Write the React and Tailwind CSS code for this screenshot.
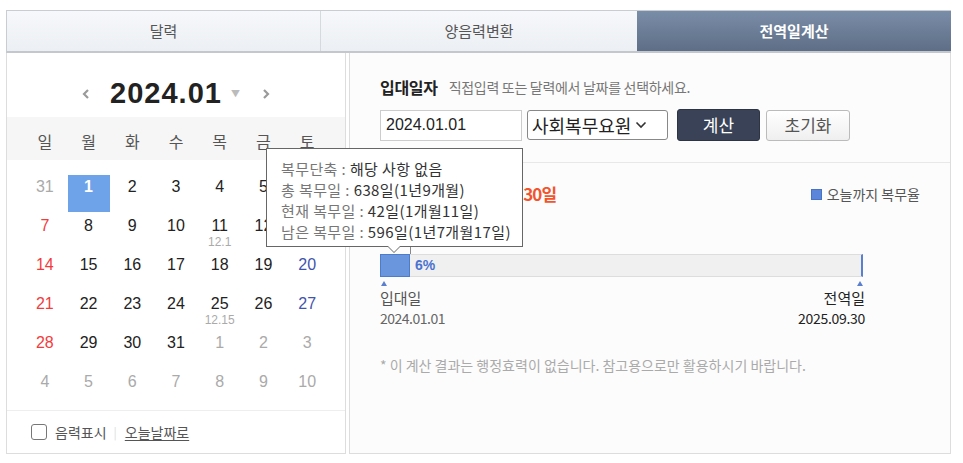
import React from "react";

const KR = "font-['Noto_Sans_CJK_KR','Noto_Sans',sans-serif]";

const rows = [
  [{ d: 31, o: true }, { d: 1, sel: true }, { d: 2 }, { d: 3 }, { d: 4 }, { d: 5 }, { d: 6 }],
  [{ d: 7 }, { d: 8 }, { d: 9 }, { d: 10 }, { d: 11, l: "12.1" }, { d: 12 }, { d: 13 }],
  [{ d: 14 }, { d: 15 }, { d: 16 }, { d: 17 }, { d: 18 }, { d: 19 }, { d: 20 }],
  [{ d: 21 }, { d: 22 }, { d: 23 }, { d: 24 }, { d: 25, l: "12.15" }, { d: 26 }, { d: 27 }],
  [{ d: 28 }, { d: 29 }, { d: 30 }, { d: 31 }, { d: 1, o: true }, { d: 2, o: true }, { d: 3, o: true }],
  [{ d: 4, o: true }, { d: 5, o: true }, { d: 6, o: true }, { d: 7, o: true }, { d: 8, o: true }, { d: 9, o: true }, { d: 10, o: true }],
];

function dayColor(c, i) {
  if (c.sel) return "text-white font-bold";
  if (c.o) return "text-[#aaaaaa]";
  if (i === 0) return "text-[#f23c3c]";
  if (i === 6) return "text-[#3f55ad]";
  return "text-[#222222]";
}

function Chevron({ dir }) {
  return (
    <svg width="8" height="12" viewBox="0 0 8 12">
      <path
        d={dir === "left" ? "M6 2 L2 6 L6 10" : "M2 2 L6 6 L2 10"}
        fill="none"
        stroke="#9a9a9a"
        strokeWidth="2.2"
      />
    </svg>
  );
}

export default function App() {
  return (
    <div className={`relative w-[963px] h-[463px] bg-white pt-[10px] px-[6px] ${KR}`}>
      {/* Tabs */}
      <div className="flex h-[43px] border-t border-[#c9ccd1] border-b-2 border-b-[#c4c7cc] border-l border-l-[#c9ccd1] w-[945px]">
        <div className="w-[314px] flex items-center justify-center bg-gradient-to-b from-[#f6f8fb] to-[#eceff3] border-r border-[#d6d9de] text-[15px] text-[#555]">
          달력
        </div>
        <div className="w-[316px] flex items-center justify-center bg-gradient-to-b from-[#f6f8fb] to-[#eceff3] text-[15px] text-[#555]">
          양음력변환
        </div>
        <div className="flex-1 flex items-center justify-center bg-gradient-to-b from-[#7a8da8] to-[#5e6e86] text-[15px] font-bold text-white">
          전역일계산
        </div>
      </div>

      <div className="flex gap-[3px] h-[401px] w-[945px]">
        {/* Left calendar */}
        <div className="w-[340px] border-l border-r border-b border-[#dddddd] flex flex-col">
          <div className="h-[64px] flex items-start justify-center pt-[17px]">
            <div className="flex items-center h-[48px]">
              <Chevron dir="left" />
              <span className="ml-[20px] text-[29px] font-bold tracking-[1px] text-[#222] font-['Liberation_Sans',Arial,sans-serif]">
                2024.01
              </span>
              <span className="ml-[9px] text-[9px] text-[#bbbbbb]">▼</span>
              <span className="ml-[22px]">
                <Chevron dir="right" />
              </span>
            </div>
          </div>
          <div className="h-[43px] bg-[#f6f6f6] grid grid-cols-7 px-[16px] items-center pt-[5px] text-[16px] text-[#555]">
            {["일", "월", "화", "수", "목", "금", "토"].map((w) => (
              <div key={w} className="text-center">
                {w}
              </div>
            ))}
          </div>
          <div className="pt-[15px] px-[16px] grid grid-cols-7 font-['Liberation_Sans',Arial,sans-serif]">
            {rows.map((r, ri) =>
              r.map((c, i) => (
                <div key={ri + "-" + i} className="h-[39px] flex flex-col items-center">
                  <div
                    className={`w-[42px] h-[37px] flex flex-col items-center pt-[2px] ${
                      c.sel ? "bg-[#6fa3e9]" : ""
                    }`}
                  >
                    <span className={`text-[16px] leading-[20px] ${dayColor(c, i)}`}>{c.d}</span>
                    {c.l && (
                      <span className="text-[12px] leading-[12px] text-[#aaaaaa]">{c.l}</span>
                    )}
                  </div>
                </div>
              ))
            )}
          </div>
          <div className="mt-auto h-[43px] border-t border-[#eeeeee] flex items-center pl-[24px] text-[14px] text-[#555]">
            <span className="w-[16px] h-[16px] border-[1.5px] border-[#777] rounded-[3px] bg-white" />
            <span className="ml-[8px]">음력표시</span>
            <span className="ml-[7px] text-[#dddddd] text-[12px]">|</span>
            <span className="ml-[8px] underline underline-offset-2">오늘날짜로</span>
          </div>
        </div>

        {/* Right panel */}
        <div className="flex-1 border-l border-r border-b border-[#dddddd] bg-[#fcfcfc] flex flex-col">
          <div className="pl-[30px] pt-[24px]">
            <div className="flex items-center h-[20px]">
              <span className="text-[16px] font-bold text-[#222] tracking-[-0.3px]">입대일자</span>
              <span className="ml-[11px] text-[14px] text-[#777] tracking-[-0.3px]">
                직접입력 또는 달력에서 날짜를 선택하세요.
              </span>
            </div>
            <div className="flex items-center mt-[12px] h-[32px]">
              <div className="w-[142px] h-[31px] border border-[#cccccc] bg-white flex items-center pl-[5px] text-[16px] text-[#222] font-['Liberation_Sans',Arial,sans-serif]">
                2024.01.01
              </div>
              <div className="ml-[5px] w-[141px] h-[30px] border border-[#888] rounded-[3px] bg-white flex items-center pl-[4px] text-[18px] text-[#222]">
                사회복무요원
                <svg className="ml-[4px]" width="12" height="8" viewBox="0 0 12 8">
                  <path d="M1.5 1.5 L6 6 L10.5 1.5" fill="none" stroke="#333" strokeWidth="1.6" />
                </svg>
              </div>
              <div className="ml-[9px] w-[83px] h-[32px] bg-[#394256] border border-[#2c3445] rounded-[3px] flex items-center justify-center text-[17px] text-white">
                계산
              </div>
              <div className="ml-[6px] w-[84px] h-[31px] bg-gradient-to-b from-white to-[#efefef] border border-[#bbbbbb] rounded-[3px] flex items-center justify-center text-[17px] text-[#555]">
                초기화
              </div>
            </div>
          </div>
          <div className="mt-[21px] border-t border-[#e8e8e8]" />
          <div className="pl-[30px] pr-[30px] pt-[21px] flex items-center justify-between h-[41px]">
            <span className="text-[17px] font-bold text-[#f2542d] tracking-[-1px]">
              전역일 : 2025년 09월 30일
            </span>
            <span className="flex items-center text-[14px] text-[#555]">
              <span className="w-[11px] h-[11px] bg-[#5b86d9] border border-[#4a72c4] mr-[5px]" />
              오늘까지 복무율
            </span>
          </div>
          <div className="pl-[30px] mt-[50px]">
            <div className="w-[483px] h-[23px] border border-[#dddddd] border-r-2 border-r-[#5b7fcf] bg-[#f0f0f0] flex items-center">
              <div className="w-[30px] h-[23px] -my-px -ml-px bg-[#6a96dd] border border-[#4f7bcc]" />
              <span className="ml-[5px] text-[14px] font-bold text-[#4a73d1] font-['Liberation_Sans',Arial,sans-serif]">
                6%
              </span>
            </div>
            <div className="w-[485px] flex justify-between mt-[4px] px-[1px]">
              <span className="w-0 h-0 border-l-[3px] border-r-[3px] border-b-[5px] border-l-transparent border-r-transparent border-b-[#5b7fcf]" />
              <span className="w-0 h-0 border-l-[3px] border-r-[3px] border-b-[5px] border-l-transparent border-r-transparent border-b-[#5b7fcf] mr-[1px]" />
            </div>
            <div className="w-[485px] flex justify-between mt-[2px]">
              <div className="flex flex-col">
                <span className="text-[15px] leading-[20px] text-[#555]">입대일</span>
                <span className="text-[14px] leading-[20px] text-[#666] tracking-[-0.5px]">2024.01.01</span>
              </div>
              <div className="flex flex-col items-end">
                <span className="text-[15px] leading-[20px] text-[#222]">전역일</span>
                <span className="text-[14px] leading-[20px] text-[#222] tracking-[-0.3px]">2025.09.30</span>
              </div>
            </div>
            <div className="mt-[27px] text-[14px] text-[#aaaaaa]">
              * 이 계산 결과는 행정효력이 없습니다. 참고용으로만 활용하시기 바랍니다.
            </div>
          </div>
        </div>
      </div>

      {/* Tooltip */}
      <div className="absolute left-[410px] top-[240px] w-px h-[14px] bg-[#888]" />
      <div className="absolute left-[266px] top-[148px] w-[257px] h-[99px] bg-white border border-[#666] pl-[14px] pt-[9px] text-[15px] leading-[21px] tracking-[0.4px]">
        <div>
          <span className="text-[#777]">복무단축 : </span>
          <span className="text-[#333]">해당 사항 없음</span>
        </div>
        <div>
          <span className="text-[#777]">총 복무일 : </span>
          <span className="text-[#333]">638일(1년9개월)</span>
        </div>
        <div>
          <span className="text-[#777]">현재 복무일 : </span>
          <span className="text-[#333]">42일(1개월11일)</span>
        </div>
        <div>
          <span className="text-[#777]">남은 복무일 : </span>
          <span className="text-[#333]">596일(1년7개월17일)</span>
        </div>
        <span className="absolute left-[120px] -bottom-[7px] w-0 h-0 border-l-[7px] border-r-[7px] border-t-[7px] border-l-transparent border-r-transparent border-t-[#666]" />
        <span className="absolute left-[121px] -bottom-[6px] w-0 h-0 border-l-[6px] border-r-[6px] border-t-[6px] border-l-transparent border-r-transparent border-t-white" />
      </div>
    </div>
  );
}
